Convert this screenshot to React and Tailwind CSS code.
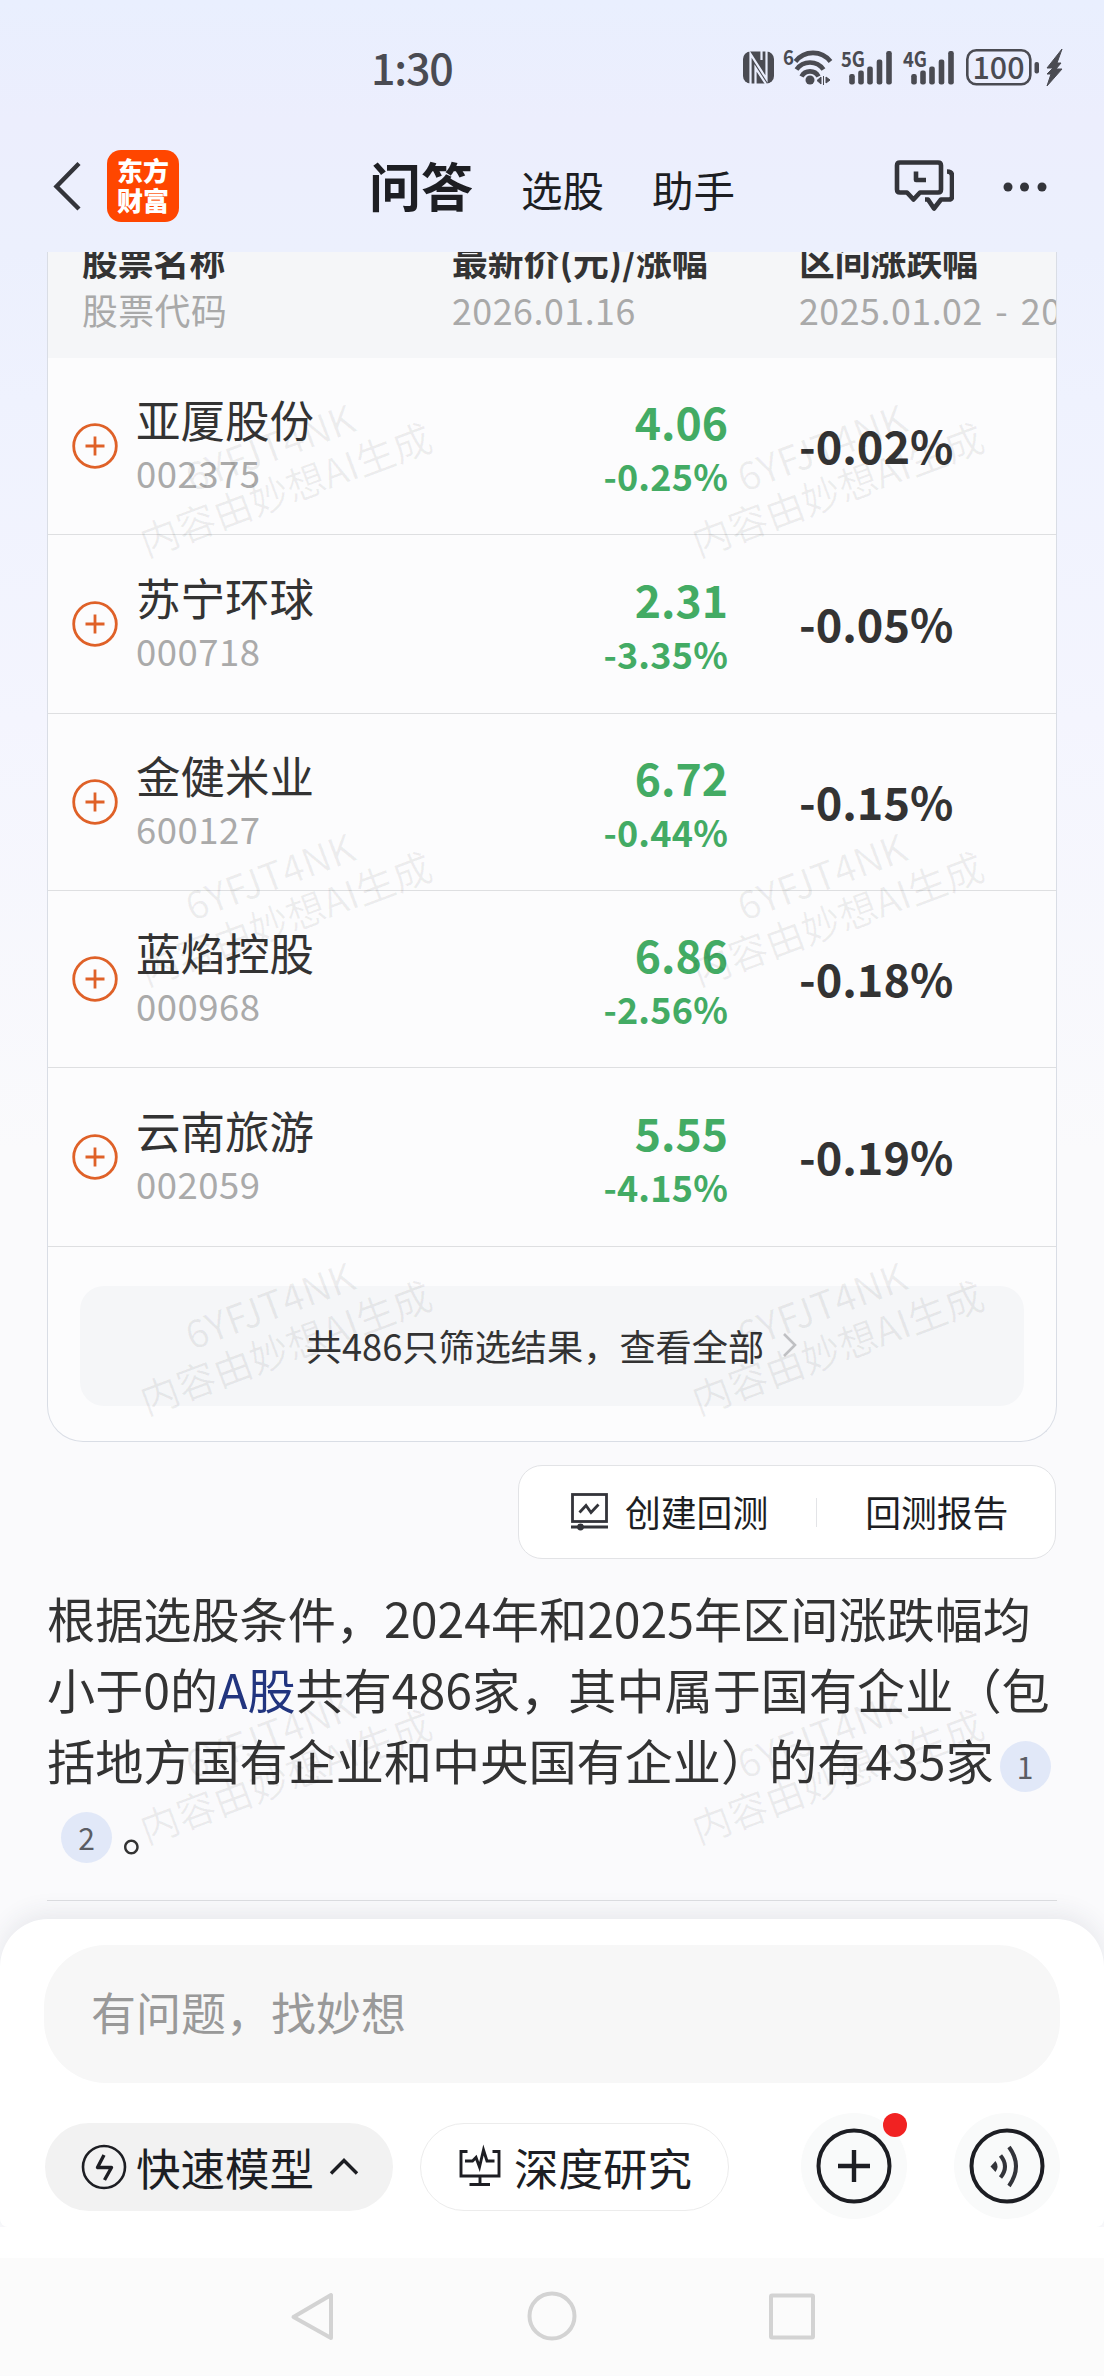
const INK = "#33343a";

function StatusBar() {
  const c = "#4a4b52";
  const bars = [[0, 74], [9, 70.5], [18, 66.5], [27.5, 59.5], [37, 51]];
  const Signal = ({ x, label }) => (
    <g>
      <text x={x - 11} y="67" fontSize="21" fontWeight="700" fill={c} textLength="24" lengthAdjust="spacingAndGlyphs">{label}</text>
      {bars.map(([dx, top]) => (
        <rect key={dx} x={x + dx - 2.8} y={top} width="5.6" height={84.5 - top} rx="2.2" fill={c} />
      ))}
    </g>
  );
  return (
    <div className="h-[136px] flex items-start justify-between pl-[371px] pr-[38px] pt-[41px]">
      <span className="-mt-[2px] text-[43px] leading-[54px] font-medium text-[#4a4b52] tracking-[-1.200px]">1:30</span>
      <svg className="w-[330px] h-[54px]" viewBox="736 41 330 54">
        <rect x="743" y="51.5" width="31" height="32" rx="7.5" fill={c} />
        <path d="M750.500 84V54L766.500 79V50M755.500 84V68l10.500 16M761.500 51v9" fill="none" stroke="#eaeefd" strokeWidth="2.200" />
        <text x="783" y="65" fontSize="20" fontWeight="700" fill={c} textLength="11" lengthAdjust="spacingAndGlyphs">6</text>
        <g fill="none" stroke={c} strokeWidth="4.600">
          <path d="M795.500 61.500a22 22 0 0 1 35 0" />
          <path d="M796.500 69.500a16.500 16.500 0 0 1 27 0" />
          <path d="M801.500 76.500a9.600 9.600 0 0 1 17 0" />
        </g>
        <circle cx="810" cy="80" r="4.500" fill={c} />
        <path d="M817 80.500l4-3.500v7zM823.500 76v9M826 77l4 3-4 3z" fill={c} stroke={c} strokeWidth="1" />
        <Signal x={852} label="5G" />
        <Signal x={914} label="4G" />
        <rect x="967.3" y="50.3" width="63" height="34" rx="9" fill="none" stroke={c} strokeWidth="2.6" />
        <text x="972.500" y="78.500" fontSize="31" fontWeight="500" fill={c} textLength="52" lengthAdjust="spacingAndGlyphs">100</text>
        <rect x="1034.500" y="62" width="4.500" height="11.500" rx="2" fill={c} />
        <path d="M1062 49l-15 19h6l-6 6h4l-4 12 15-17h-6l5-6h-4z" fill={c} stroke={c} strokeWidth="1" />
      </svg>
    </div>
  );
}

function TopBar() {
  return (
    <div className="h-[116px] flex items-start pl-[52px]">
      <svg className="mt-[23px] w-[32px] h-[54px]" viewBox="0 0 32 54" fill="none" stroke={INK} strokeWidth="4.4">
        <path d="M27 4.500 4.500 27.500 27 50" />
      </svg>
      <div className="ml-[23px] mt-[14px] w-[72px] h-[72px] rounded-[14px] bg-[#ff4600] flex flex-col items-center justify-center text-white font-black text-[26px] leading-[30px] pb-[2px]">
        <span>东方</span>
        <span>财富</span>
      </div>
      <nav className="ml-[190px] flex text-[#1d1e23] whitespace-nowrap">
        <span className="mt-[14px] w-[152px] text-[52px] leading-[70px] font-bold">问答</span>
        <span className="mt-[25px] w-[131px] text-[41.500px] leading-[56px]">选股</span>
        <span className="mt-[25px] w-[100px] text-[41.500px] leading-[56px]">助手</span>
      </nav>
      <svg className="ml-[138px] mt-[20px] w-[64px] h-[60px]" viewBox="888 156 64 60" fill="none" stroke={INK} strokeWidth="4.600" strokeLinejoin="round">
        <path d="M898 162.500h38q3 0 3 3v24q0 3-3 3h-18l-6.500 7-6.500-7h-7q-3 0-3-3v-24q0-3 3-3z" />
        <path d="M945 171.500q5 0 5 4v21q0 3-3 3h-8l-7 9-6-9h-3" />
        <path d="M914 171.500v8.500h10" />
      </svg>
      <svg className="ml-[46px] mt-[44px] w-[48px] h-[14px]" viewBox="0 0 48 14" fill={INK}>
        <circle cx="8" cy="7" r="4.500" />
        <circle cx="24.500" cy="7" r="4.500" />
        <circle cx="42" cy="7" r="4.500" />
      </svg>
    </div>
  );
}

const stocks = [
  { name: "亚厦股份", code: "002375", price: "4.06", pct: "-0.25%", range: "-0.02%", h: "h-[177px]" },
  { name: "苏宁环球", code: "000718", price: "2.31", pct: "-3.35%", range: "-0.05%", h: "h-[179px]" },
  { name: "金健米业", code: "600127", price: "6.72", pct: "-0.44%", range: "-0.15%", h: "h-[177px]" },
  { name: "蓝焰控股", code: "000968", price: "6.86", pct: "-2.56%", range: "-0.18%", h: "h-[177px]" },
  { name: "云南旅游", code: "002059", price: "5.55", pct: "-4.15%", range: "-0.19%", h: "h-[179px]" },
];

function StockRow({ s }) {
  return (
    <div className={`${s.h} flex items-center border-b border-[#dedfe1]`}>
      <svg className="ml-[23px] w-[48px] h-[48px] shrink-0" viewBox="0 0 48 48" fill="none" stroke="#df6128" strokeWidth="2.800">
        <circle cx="24" cy="24" r="21.300" />
        <path d="M24 14.500v19M14.500 24h19" />
      </svg>
      <div className="ml-[17px] w-[300px] flex flex-col pb-[3px]">
        <span className="text-[44.500px] leading-[56px] text-[#333]">{s.name}</span>
        <span className="text-[36.500px] leading-[51px] text-[#aaa] tracking-[0.500px]">{s.code}</span>
      </div>
      <div className="w-[292px] pt-[2px] flex flex-col items-end text-right font-bold text-[#43ab64]">
        <span className="text-[44.500px] leading-[56px]">{s.price}</span>
        <span className="text-[36px] leading-[53px] tracking-[0.2px]">{s.pct}</span>
      </div>
      <span className="ml-[71px] text-[45px] leading-[58px] pb-[2px] font-bold text-[#333]">{s.range}</span>
    </div>
  );
}

function StockCard() {
  return (
    <section className="mx-[47px] h-[1190px] border border-t-0 border-[#d9dde5] rounded-b-[36px] bg-[#fcfcfd] overflow-hidden">
      <div className="h-[106px] bg-[#f5f6f8] flex items-end pl-[34px] pb-[24px] whitespace-nowrap overflow-hidden">
        {[
          ["股票名称", "股票代码", "w-[370px]"],
          ["最新价(元)/涨幅", "2026.01.16", "w-[347px]"],
          ["区间涨跌幅", "2025.01.02 - 2026.01.16", "w-[260px]"],
        ].map(([a, b, w]) => (
          <div key={a} className={`${w} shrink-0 flex flex-col`}>
            <span className="text-[35.800px] leading-[49px] font-bold text-[#333]">{a}</span>
            <span className="text-[35.800px] leading-[49px] text-[#a9a9a9] tracking-[0.500px] [word-spacing:4px]">{b}</span>
          </div>
        ))}
      </div>
      {stocks.map((s) => <StockRow key={s.code} s={s} />)}
      <div className="mt-[39px] mx-[32px] h-[120px] rounded-[24px] bg-[#f5f6f8] flex items-center justify-center pb-[2px] text-[36.200px] text-[#333]">
        <span>共486只筛选结果，查看全部</span>
        <svg className="ml-[18px] w-[16px] h-[26px]" viewBox="0 0 16 26" fill="none" stroke="#bfc0c3" strokeWidth="2.600">
          <path d="M2 2l11 11L2 24" />
        </svg>
      </div>
    </section>
  );
}

function Backtest() {
  return (
    <div className="mt-[23px] ml-[518px] w-[538px] h-[94px] rounded-[24px] border border-[#e2e3e6] bg-white flex items-center text-[35.800px] text-[#1d1e23] whitespace-nowrap">
      <svg className="ml-[50px] w-[42px] h-[42px]" viewBox="0 0 42 42" fill="none" stroke={INK} strokeWidth="2.800">
        <rect x="3.500" y="3.500" width="34" height="27" />
        <path d="M10.500 21.500l6.500-7 5 7 7.500-8M2 36h37" />
        <circle cx="11.500" cy="36" r="3.400" fill={INK} stroke="none" />
      </svg>
      <span className="ml-[14px]">创建回测</span>
      <span className="ml-[48px] w-px h-[29px] bg-[#e3e4e7]" />
      <span className="ml-[48px]">回测报告</span>
    </div>
  );
}

function Cite({ n, className }) {
  return (
    <span className={`${className} inline-flex w-[51px] h-[51px] rounded-full bg-[#e1e8f8] items-center justify-center text-[30px] leading-none pb-[2px] text-[#5b5d64]`}>{n}</span>
  );
}

function Answer() {
  return (
    <div className="mt-[23px] mx-[47px] h-[319px] border-b border-[#dddee1] text-[48.150px] leading-[71px] text-[#333] whitespace-nowrap">
      <p>根据选股条件，2024年和2025年区间涨跌幅均</p>
      <p>小于0的<span className="text-[#22357f]">A股</span>共有486家，其中属于国有企业（包</p>
      <p className="flex items-center h-[71px]">括地方国有企业和中央国有企业）的有435家<Cite n="1" className="ml-[6px] mt-[14px]" /></p>
      <p className="flex items-center h-[71px]"><Cite n="2" className="ml-[14px] mt-[14px]" /><span className="ml-[10px]">。</span></p>
    </div>
  );
}

function Composer() {
  return (
    <div className="mt-[18px]">
      <div className="h-[308px] rounded-t-[48px] rounded-b-[8px] bg-white shadow-[0_-6px_24px_rgba(40,50,80,0.09)] px-[44px] pt-[26px]">
        <div className="h-[138px] rounded-[62px] bg-[#f7f7f7] flex items-center pl-[47px] pb-[5px] text-[45px] text-[#999]">有问题，找妙想</div>
        <div className="mt-[30px] flex items-center h-[106px] text-[44.500px] text-[#1d1e23] whitespace-nowrap">
          <button className="w-[348px] h-[88px] rounded-full bg-[#f2f2f2] flex items-center ml-px mt-[2px]">
            <svg className="ml-[36px] w-[46px] h-[48px]" viewBox="0 0 46 48" fill="none" stroke="#1d1e23" strokeWidth="2.600" strokeLinejoin="round">
              <circle cx="23" cy="24" r="21" />
              <path d="M23 12l-6.500 12.500h14L23.500 37" strokeWidth="3.400" />
            </svg>
            <span className="ml-[9px]">快速模型</span>
            <svg className="ml-[15px] w-[30px] h-[20px]" viewBox="0 0 30 20" fill="none" stroke="#1d1e23" strokeWidth="3.400">
              <path d="M2 16.500 15 3.500l13 13" />
            </svg>
          </button>
          <button className="ml-[27px] w-[309px] h-[88px] rounded-full border border-[#ececec] flex items-center mt-[2px]">
            <svg className="ml-[36px] w-[46px] h-[46px]" viewBox="457 2145 46 46" fill="none" stroke="#1d1e23" strokeWidth="2.900">
              <path d="M467.500 2152.500h-6.500v24.500h38v-24.500h-6.500M480 2177v8M469.500 2185.500h20.500" />
              <path d="M465 2162h7.500l3.500-3.500 3.500 9.500 4-17 3.500 11h7.500" />
            </svg>
            <span className="ml-[11px]">深度研究</span>
          </button>
          <div className="relative ml-[72px] w-[106px] h-[106px] rounded-full bg-[#f9fafa] flex items-center justify-center">
            <svg className="w-[78px] h-[78px]" viewBox="0 0 78 78" fill="none" stroke="#1d1e23" strokeWidth="4">
              <circle cx="39" cy="39" r="35.500" />
              <path d="M39 23v32M23 39h32" strokeWidth="4.400" />
            </svg>
            <span className="absolute right-0 top-0 w-[24px] h-[24px] rounded-full bg-[#f12222]" />
          </div>
          <div className="ml-[47px] w-[106px] h-[106px] rounded-full bg-[#f9fafa] flex items-center justify-center">
            <svg className="w-[78px] h-[78px]" viewBox="0 0 78 78" fill="none" stroke={INK} strokeWidth="4">
              <circle cx="39" cy="39" r="35.500" stroke="#1d1e23" />
              <path d="M22.500 39.500l5-5.500q4 5.500 0 11z" fill={INK} stroke="none" />
              <path d="M32.500 28.500q9 11 0 22M41 20q14 19 0 39" />
            </svg>
          </div>
        </div>
      </div>
      <div className="relative h-[31px] bg-white" />
    </div>
  );
}

function NavBar() {
  return (
    <div className="relative h-[117px] bg-[#fbfbfb] flex justify-center pt-[32px]">
      <svg className="w-[528px] h-[54px]" viewBox="288 0 528 54" fill="none" stroke="#d3d3d3" strokeWidth="4" strokeLinejoin="round">
        <path d="M331 5v43L293.500 27z" />
        <circle cx="552" cy="26" r="22.500" />
        <rect x="771" y="5.500" width="42" height="42" rx="1" />
      </svg>
    </div>
  );
}

function Watermarks() {
  return (
    <div className="absolute left-0 top-[252px] w-full h-[1668px] overflow-hidden pointer-events-none grid grid-cols-2 auto-rows-[429px] content-start">
      {[0, 1, 2, 3, 4, 5, 6, 7].map((i) => (
        <div key={i} className="flex justify-center pt-[170px] pl-[2px] h-[429px]">
          <div className="h-[90px] -rotate-[20.500deg] text-center text-[39px] leading-[45px] text-black/[0.06] whitespace-nowrap">
            6YFJT4NK<br />内容由妙想AI生成
          </div>
        </div>
      ))}
    </div>
  );
}

export default function App() {
  return (
    <div className="relative w-[1104px] h-[2376px] overflow-hidden font-['Noto_Sans_CJK_SC',sans-serif] bg-[linear-gradient(180deg,#e9effe_0px,#eceefd_120px,#ecf0fd_250px,#eff2fe_400px,#f4f5fe_720px,#fafafc_1150px,#fafafc_2376px)]">
      <StatusBar />
      <TopBar />
      <StockCard />
      <Backtest />
      <Answer />
      <Watermarks />
      <div className="relative">
        <Composer />
        <NavBar />
      </div>
    </div>
  );
}
